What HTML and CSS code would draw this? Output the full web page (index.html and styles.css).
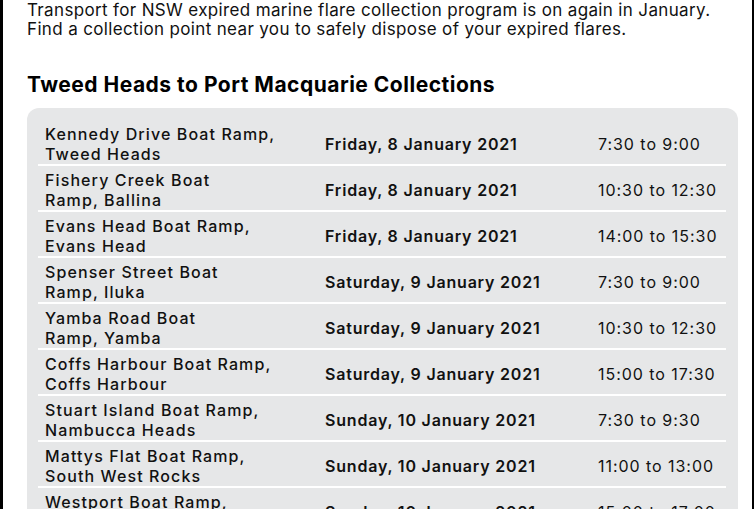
FILE: index.html
```html
<!DOCTYPE html>
<html lang="en">
<head>
<meta charset="utf-8">
<title>Marine flare collection</title>
<link rel="stylesheet" href="styles.css">
</head>
<body>
<div class="frame">
  <p class="intro">Transport for NSW expired marine flare collection program is on again in January.<br>Find a collection point near you to safely dispose of your expired flares.</p>
  <h2 class="heading">Tweed Heads to Port Macquarie Collections</h2>
  <div class="panel">
    <table class="sched">
      <colgroup><col class="c-place"><col class="c-date"><col class="c-time"></colgroup>
      <tbody>
        <tr><td class="place">Kennedy Drive Boat Ramp,<br>Tweed Heads</td><td class="date">Friday, 8 January 2021</td><td class="time">7:30 to 9:00</td></tr>
        <tr><td class="place">Fishery Creek Boat<br>Ramp, Ballina</td><td class="date">Friday, 8 January 2021</td><td class="time">10:30 to 12:30</td></tr>
        <tr><td class="place">Evans Head Boat Ramp,<br>Evans Head</td><td class="date">Friday, 8 January 2021</td><td class="time">14:00 to 15:30</td></tr>
        <tr><td class="place">Spenser Street Boat<br>Ramp, Iluka</td><td class="date">Saturday, 9 January 2021</td><td class="time">7:30 to 9:00</td></tr>
        <tr><td class="place">Yamba Road Boat<br>Ramp, Yamba</td><td class="date">Saturday, 9 January 2021</td><td class="time">10:30 to 12:30</td></tr>
        <tr><td class="place">Coffs Harbour Boat Ramp,<br>Coffs Harbour</td><td class="date">Saturday, 9 January 2021</td><td class="time">15:00 to 17:30</td></tr>
        <tr><td class="place">Stuart Island Boat Ramp,<br>Nambucca Heads</td><td class="date">Sunday, 10 January 2021</td><td class="time">7:30 to 9:30</td></tr>
        <tr><td class="place">Mattys Flat Boat Ramp,<br>South West Rocks</td><td class="date">Sunday, 10 January 2021</td><td class="time">11:00 to 13:00</td></tr>
        <tr><td class="place">Westport Boat Ramp,<br>Port Macquarie</td><td class="date">Sunday, 10 January 2021</td><td class="time">15:00 to 17:00</td></tr>
      </tbody>
    </table>
  </div>
</div>
</body>
</html>
```
FILE: styles.css
```css
html, body {
  margin: 0;
  padding: 0;
  background: #fff;
}
body {
  font-family: Inter, "Liberation Sans", sans-serif;
  color: #111;
  overflow: hidden;
  height: 509px;
}
.frame {
  box-sizing: border-box;
  width: 754px;
  height: 509px;
  border-left: 3px solid #000;
  border-right: 2px solid #000;
  padding-left: 24px;
  padding-right: 14px;
  overflow: hidden;
}
.intro {
  margin: 0;
  padding-top: 1px;
  font-size: 17px;
  line-height: 19px;
  font-weight: 400;
  letter-spacing: 0.35px;
  color: #111;
  white-space: nowrap;
}
.heading {
  margin: 33px 0 10px 0;
  font-size: 21px;
  line-height: 26px;
  font-weight: 700;
  letter-spacing: 0.5px;
  color: #000;
}
.panel {
  background: #e6e7e8;
  border-radius: 12px;
  padding: 12px 11px;
}
.sched {
  width: 688px;
  border-collapse: collapse;
  table-layout: fixed;
}
.c-place { width: 280px; }
.c-date { width: 273px; }
.c-time { width: 135px; }
.sched tr {
  border-bottom: 2px solid #fff;
}
.sched td {
  height: 40px;
  padding: 4px 7px 0;
  vertical-align: middle;
  font-size: 16px;
  line-height: 20px;
  color: #111;
  white-space: nowrap;
}
.place { font-weight: 500; letter-spacing: 1.1px; }
.date { font-weight: 600; letter-spacing: 0.8px; }
.time { font-weight: 400; letter-spacing: 0.95px; }
```
